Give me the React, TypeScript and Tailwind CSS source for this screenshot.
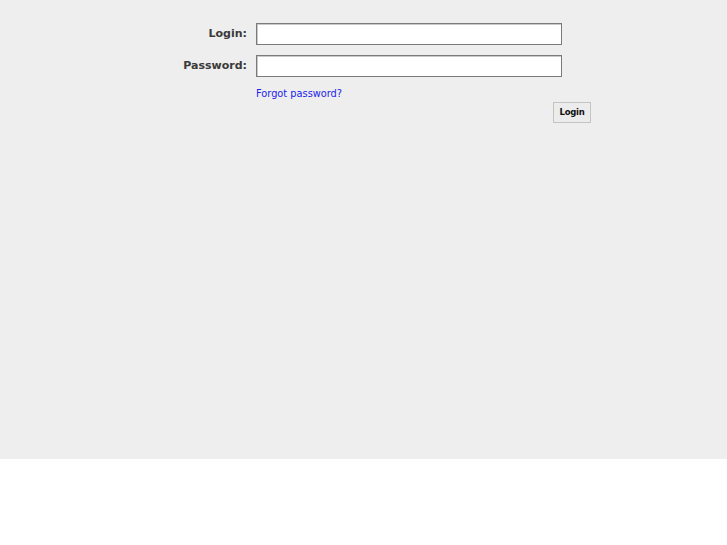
import React from "react";

const font = { fontFamily: '"DejaVu Sans", Verdana, sans-serif' };

export default function App() {
  return (
    <div style={font} className="w-full">
      <div className="h-[459px] bg-[#eeeeee] pt-[23px]">
        <div className="mx-auto w-[455px]">
          {/* Login row */}
          <div className="flex items-center">
            <label className="w-[111px] text-right text-[11px] font-bold text-[#3a3a3a]">
              Login:
            </label>
            <input
              type="text"
              className="ml-[9px] h-[22px] w-[306px] border border-[#7a7a7a] bg-white shadow-[inset_1px_1px_0_#c8c8c8] outline-none"
            />
          </div>
          {/* Password row */}
          <div className="mt-[10px] flex items-center">
            <label className="w-[111px] text-right text-[11px] font-bold text-[#3a3a3a]">
              Password:
            </label>
            <input
              type="password"
              className="ml-[9px] h-[22px] w-[306px] border border-[#7a7a7a] bg-white shadow-[inset_1px_1px_0_#c8c8c8] outline-none"
            />
          </div>
          <div className="mt-[10px] pl-[120px] leading-[14px]">
            <a href="#" className="block text-[9.8px] leading-[14px] text-[#2222ee]">
              Forgot password?
            </a>
          </div>
          <div className="mt-[1px] flex justify-end leading-none">
            <button className="h-[21px] w-[38px] border border-[#c4c4c4] bg-[#ececec] text-[8.5px] font-bold tracking-[-0.3px] text-[#111]">
              Login
            </button>
          </div>
        </div>
      </div>
      <div className="h-[86px] bg-white" />
    </div>
  );
}
